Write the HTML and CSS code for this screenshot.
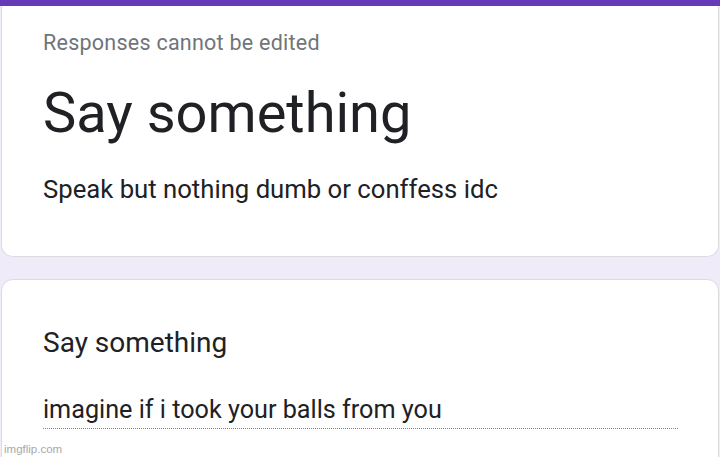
FILE: index.html
```html
<!DOCTYPE html>
<html lang="en">
<head>
<meta charset="utf-8">
<title>Say something</title>
<link rel="stylesheet" href="styles.css">
</head>
<body>
<div class="bar"></div>
<div class="stack">
  <section class="card card-head">
    <p class="note">Responses cannot be edited</p>
    <h1 class="title">Say something</h1>
    <p class="desc">Speak but nothing dumb or conffess idc</p>
  </section>
  <section class="card card-q">
    <h2 class="question">Say something</h2>
    <div class="answer">imagine if i took your balls from you</div>
  </section>
</div>
<div class="watermark">imgflip.com</div>
</body>
</html>
```
FILE: styles.css
```css
html, body {
  margin: 0;
  padding: 0;
  height: 100%;
  overflow: hidden;
}
body {
  background: #f0ebf8;
  font-family: Roboto, "Noto Sans", Arial, sans-serif;
  color: #202124;
  position: relative;
}
.bar {
  height: 6px;
  background: #673ab7;
}
.stack {
  display: flex;
  flex-direction: column;
  gap: 22px;
  padding: 0 1px;
}
.card {
  background: #fff;
  border: 1px solid #dadce0;
  padding-left: 41px;
}
.card-head {
  border-top: none;
  border-radius: 0 0 12px 12px;
  padding-top: 24px;
  padding-bottom: 51px;
}
.card-q {
  border-radius: 12px;
  padding-top: 46px;
  height: 200px;
}
p, h1, h2 { margin: 0; font-weight: 400; }
.note {
  font-size: 21.5px;
  line-height: 26px;
  color: #70757a;
  letter-spacing: 0.25px;
}
.title {
  font-size: 56px;
  line-height: 68px;
  margin-top: 23px;
}
.desc {
  font-size: 25.7px;
  line-height: 32px;
  margin-top: 26px;
}
.question {
  font-size: 28px;
  line-height: 34px;
}
.answer {
  width: 635px;
  font-size: 25.2px;
  line-height: 32px;
  margin-top: 34px;
  padding-bottom: 2px;
  border-bottom: 1px dotted #80868b;
}
.watermark {
  position: absolute;
  left: 4px;
  bottom: 2px;
  font-family: "Liberation Sans", Arial, sans-serif;
  font-size: 11.5px;
  color: #a8a8a8;
}
```
